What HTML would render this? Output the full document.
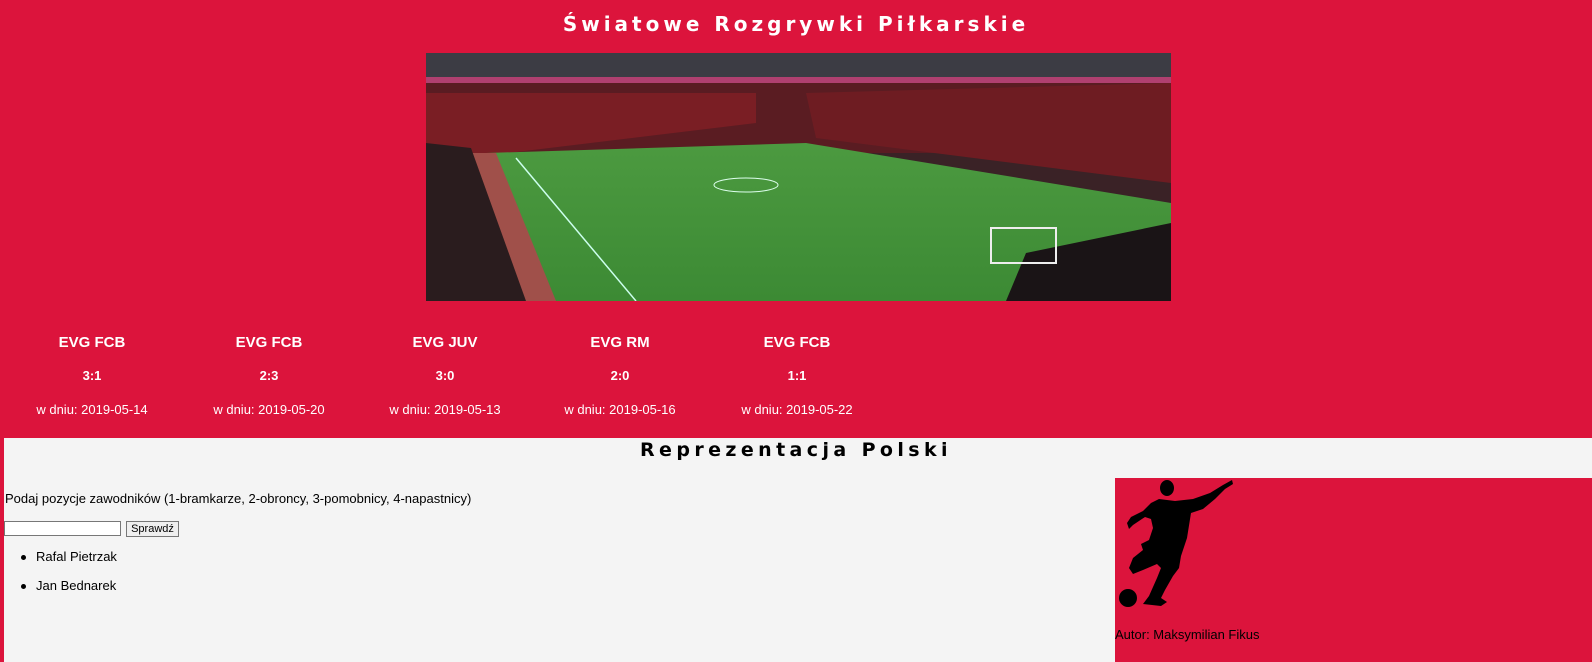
<!DOCTYPE html>
<html><head><meta charset="utf-8"><style>
html,body{margin:0;padding:0;}
body{width:1592px;height:662px;background:#DC143C;position:relative;overflow:hidden;font-family:"DejaVu Sans","Liberation Sans",sans-serif;}
.abs{position:absolute;}
h1{position:absolute;left:0;width:1592px;top:12px;margin:0;text-align:center;color:#fff;font-size:20px;font-weight:bold;letter-spacing:4px;font-family:"DejaVu Sans",sans-serif;}
.m{position:absolute;width:176px;text-align:center;color:#fff;font-size:13px;font-family:"Liberation Sans",sans-serif;}
.m b{position:absolute;left:0;width:176px;font-size:15px;}
.m span{position:absolute;left:0;width:176px;}
#grey{position:absolute;left:4px;top:438px;width:1588px;height:224px;background:#f4f4f4;}
h2{position:absolute;left:0;width:1592px;top:439px;margin:0;text-align:center;font-size:19px;font-weight:bold;letter-spacing:4.4px;color:#000;}
.t{position:absolute;font-size:13px;color:#000;font-family:"Liberation Sans",sans-serif;}
</style></head><body>
<h1>Światowe Rozgrywki Piłkarskie</h1>
<svg class="abs" style="left:426px;top:53px" width="745" height="248" viewBox="0 0 745 248">
<defs>
<linearGradient id="g" x1="0" y1="0" x2="0" y2="1"><stop offset="0" stop-color="#4c9a40"/><stop offset="1" stop-color="#3c8a34"/></linearGradient>
</defs>
<rect width="745" height="248" fill="#3a2226"/>
<rect y="0" width="745" height="28" fill="#3c3c44"/>
<rect y="24" width="745" height="6" fill="#b04070"/>
<rect y="30" width="745" height="70" fill="#5a1c22"/>
<polygon points="0,40 330,40 330,70 0,110" fill="#7a1e24"/>
<polygon points="380,40 745,30 745,130 390,85" fill="#6e1c22"/>
<polygon points="60,100 380,90 745,150 745,248 110,248" fill="url(#g)"/>
<polygon points="40,100 70,100 130,248 90,248" fill="#a0504a"/>
<polygon points="0,90 45,95 100,248 0,248" fill="#2a1c1e"/>
<polygon points="600,200 745,170 745,248 580,248" fill="#1a1416"/>
<rect x="565" y="175" width="65" height="35" fill="none" stroke="#eee" stroke-width="2"/>
<line x1="90" y1="105" x2="210" y2="248" stroke="#cfe" stroke-width="1.5"/>
<ellipse cx="320" cy="132" rx="32" ry="7" fill="none" stroke="#dfe" stroke-width="1"/>
</svg>
<div class="m" style="left:4px;top:0"><b style="top:334px">EVG FCB</b><b style="top:368px;font-size:13px">3:1</b><span style="top:402px">w dniu: 2019-05-14</span></div>
<div class="m" style="left:181px;top:0"><b style="top:334px">EVG FCB</b><b style="top:368px;font-size:13px">2:3</b><span style="top:402px">w dniu: 2019-05-20</span></div>
<div class="m" style="left:357px;top:0"><b style="top:334px">EVG JUV</b><b style="top:368px;font-size:13px">3:0</b><span style="top:402px">w dniu: 2019-05-13</span></div>
<div class="m" style="left:532px;top:0"><b style="top:334px">EVG RM</b><b style="top:368px;font-size:13px">2:0</b><span style="top:402px">w dniu: 2019-05-16</span></div>
<div class="m" style="left:709px;top:0"><b style="top:334px">EVG FCB</b><b style="top:368px;font-size:13px">1:1</b><span style="top:402px">w dniu: 2019-05-22</span></div>
<div id="grey"></div>
<h2>Reprezentacja Polski</h2>
<div class="t" style="left:5px;top:491px">Podaj pozycje zawodników (1-bramkarze, 2-obroncy, 3-pomobnicy, 4-napastnicy)</div>
<div class="abs" style="left:4px;top:521px;width:115px;height:13px;background:#fff;border:1px solid #777"></div>
<div class="abs" style="left:126px;top:521px;width:51px;height:14px;background:#efefef;border:1px solid #777;font-size:11px;line-height:14px;text-align:center;font-family:'Liberation Sans',sans-serif">Sprawdź</div>
<div class="abs" style="left:21px;top:555px;width:5px;height:5px;border-radius:50%;background:#000"></div>
<div class="t" style="left:36px;top:549px">Rafal Pietrzak</div>
<div class="abs" style="left:21px;top:584px;width:5px;height:5px;border-radius:50%;background:#000"></div>
<div class="t" style="left:36px;top:578px">Jan Bednarek</div>
<div class="abs" style="left:1115px;top:478px;width:477px;height:184px;background:#DC143C"></div>
<svg class="abs" style="left:1115px;top:478px" width="125" height="132" viewBox="0 0 125 132">
<g fill="#000">
<ellipse cx="52" cy="10" rx="7" ry="8"/>
<circle cx="13" cy="120" r="9"/>
<path d="M44 21 L60 23 L78 21 L95 15 L108 7 L117 2 L118 6 L110 11 L100 21 L88 31 L76 35 L72 60 L66 78 L64 90 L58 98 L50 112 L46 120 L52 124 L46 128 L28 126 L34 118 L42 100 L46 90 L42 86 L28 92 L18 96 L14 90 L18 80 L28 72 L26 66 L34 62 L38 50 L36 41 L30 39 L18 47 L14 51 L12 45 L16 39 L28 33 L36 25 Z"/>
</g>
</svg>
<div class="t" style="left:1115px;top:627px">Autor: Maksymilian Fikus</div>
</body></html>
